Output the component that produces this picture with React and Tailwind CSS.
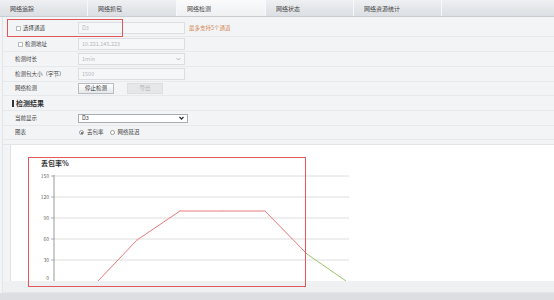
const font = { fontFamily: '"Noto Sans CJK SC", "Noto Sans", sans-serif' };

const tabs = [
  { name: "网络追踪", w: "w-[88px]" },
  { name: "网络抓包", w: "w-[89px]" },
  { name: "网络检测", w: "w-[89px]", active: true },
  { name: "网络状态", w: "w-[88px]" },
  { name: "网络资源统计", w: "w-[88px]" },
];

function Box() {
  return (
    <span className="inline-block w-[5px] h-[5px] border border-[#b9bcc0] bg-white shrink-0" />
  );
}

function Chevron({ color = "#b5b7ba", w = 1 }) {
  return (
    <svg width="5" height="4" viewBox="0 0 5 4" className="block">
      <path d="M0.5 1 L2.5 3 L4.5 1" fill="none" stroke={color} strokeWidth={w} />
    </svg>
  );
}

function Row({ h = "h-[15px]", label, children }) {
  return (
    <div className={`flex items-center ${h} border-b border-[#e7e9ec]`}>
      <div className="w-[75px] flex items-center h-full">{label}</div>
      <div className="flex items-center gap-[3px]">{children}</div>
    </div>
  );
}

function Input({ value, select }) {
  return (
    <div className="w-[107px] h-[12px] border border-[#dcdee1] bg-[#f6f7f8] flex items-center justify-between px-[3px] text-[5.5px] text-[#b5b7ba]">
      <span>{value}</span>
      {select && <Chevron />}
    </div>
  );
}

function Chart() {
  const y = (v) => 136 - v * 0.7;
  const grid = [150, 120, 90, 60, 30];
  return (
    <svg width="544" height="136" className="block">
      <text x="30" y="21" fontSize="7" fontWeight="bold" fill="#333">丢包率%</text>
      {grid.map((v) => (
        <g key={v}>
          <line x1="43" x2="338" y1={y(v)} y2={y(v)} stroke="#dedede" strokeWidth="1" />
          <line x1="40" x2="43" y1={y(v)} y2={y(v)} stroke="#999" strokeWidth="0.8" />
          <text x="38" y={y(v) + 2} fontSize="5" fill="#666" textAnchor="end">{v}</text>
        </g>
      ))}
      <text x="38" y="135" fontSize="5" fill="#666" textAnchor="end">0</text>
      <line x1="43" x2="43" y1="30" y2="136" stroke="#999" strokeWidth="1" />
      <polyline
        points="87,136 126,95 169,66 211,66 254,66 296,109"
        fill="none"
        stroke="#e47a7a"
        strokeWidth="1"
      />
      <line x1="296" y1="109" x2="335" y2="136" stroke="#9bc46a" strokeWidth="1" />
      <circle cx="169" cy="66" r="1" fill="#f3b3b3" />
      <circle cx="211" cy="66" r="1" fill="#f3b3b3" />
      <circle cx="126" cy="95" r="1" fill="#f3b3b3" />
    </svg>
  );
}

export default function App() {
  return (
    <div
      className="relative w-[554px] h-[300px] overflow-hidden bg-[#f3f4f6] text-[#444]"
      style={font}
    >
      {/* tabs */}
      <div className="flex h-[17px] bg-gradient-to-b from-[#eef0f2] to-[#dcdfe3] border-b border-[#c9ccd1]">
        {tabs.map((t) => (
          <div
            key={t.name}
            className={`${t.w} flex items-center pl-[10px] text-[6px] border-r border-[#f7f8f9] ${
              t.active ? "bg-gradient-to-b from-[#fbfbfc] to-[#eef0f2]" : ""
            }`}
          >
            {t.name}
          </div>
        ))}
      </div>

      <div className="border-l border-[#e2e4e7] ml-[2px] pt-[3px]">
        {/* form */}
        <Row
          h="h-[17px]"
          label={
            <div className="flex items-center gap-[2px] pl-[13px] text-[5.5px]">
              <Box />
              <span>选择通道</span>
            </div>
          }
        >
          <Input value="D3" />
          <span className="text-[5.5px] text-[#d2874f] ml-[1px]">最多支持5个通道</span>
        </Row>
        <Row
          label={
            <div className="flex items-center gap-[2px] pl-[15px] text-[5.5px]">
              <Box />
              <span>检测地址</span>
            </div>
          }
        >
          <Input value="10.221.145.223" />
        </Row>
        <Row label={<span className="pl-[12px] text-[5.5px]">检测时长</span>}>
          <Input value="1min" select />
        </Row>
        <Row label={<span className="pl-[12px] text-[5.5px]">检测包大小（字节）</span>}>
          <Input value="1500" />
        </Row>
        <Row h="h-[14px]" label={<span className="pl-[12px] text-[5.5px]">网络检测</span>}>
          <button className="w-[36px] h-[11px] border border-[#b9bcc1] bg-gradient-to-b from-white to-[#e6e8eb] text-[5.5px] text-[#333] leading-none">
            停止检测
          </button>
          <button className="ml-[10px] w-[36px] h-[11px] border border-[#dcdee1] bg-[#e6e7e9] text-[5.5px] text-[#b5b7ba] leading-none">
            导出
          </button>
        </Row>

        {/* result section */}
        <div className="flex items-center h-[15px] border-b border-[#e7e9ec] pl-[9px]">
          <span className="w-[2px] h-[7px] bg-[#333] mr-[2px]" />
          <span className="text-[7px] font-bold text-[#333]">检测结果</span>
        </div>
        <Row label={<span className="pl-[12px] text-[5.5px]">当前显示</span>}>
          <div className="w-[110px] h-[9px] border border-[#a9acb0] bg-white flex items-center justify-between px-[3px] text-[5.5px] text-[#333]">
            <span>D3</span>
            <Chevron color="#333" w={1.3} />
          </div>
        </Row>
        <Row h="h-[14px]" label={<span className="pl-[12px] text-[5.5px]">图表</span>}>
          <span className="w-[5px] h-[5px] rounded-full border border-[#999] bg-white flex items-center justify-center ml-[1px]">
            <span className="w-[2px] h-[2px] rounded-full bg-[#555]" />
          </span>
          <span className="text-[5.5px]">丢包率</span>
          <span className="w-[5px] h-[5px] rounded-full border border-[#999] bg-white ml-[3px]" />
          <span className="text-[5.5px]">网络延迟</span>
        </Row>
        <div className="h-[5px] border-b border-[#e2e4e7]" />

        {/* chart panel */}
        <div className="ml-[7px] bg-white h-[136px] border-l border-[#dfe1e4]">
          <Chart />
        </div>
        <div className="h-[12px] bg-[#eff0f2] border-b border-[#e4e6e9]" />
      </div>
      <div className="h-[10px] bg-[#dcdee1]" />

      {/* annotations */}
      <div className="absolute left-[7px] top-[19px] w-[116px] h-[18px] border-[1.5px] border-[#e0585c]" />
      <div className="absolute left-[28px] top-[157px] w-[278px] h-[130px] border-[1.5px] border-[#e0585c]" />
    </div>
  );
}
